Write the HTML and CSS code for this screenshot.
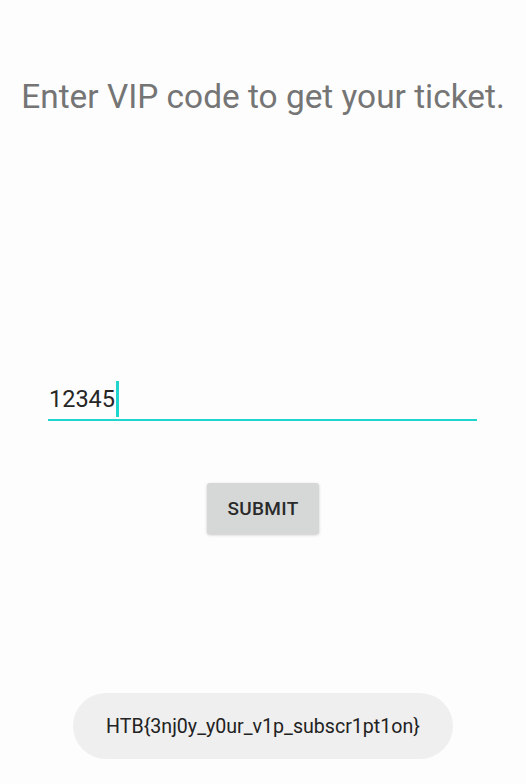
FILE: index.html
```html
<!DOCTYPE html>
<html>
<head>
<meta charset="utf-8">
<link rel="stylesheet" href="styles.css">
</head>
<body>
<div class="screen">
  <h1 class="title">Enter VIP code to get your ticket.</h1>
  <div class="field">
    <span class="value">12345</span><span class="caret"></span>
  </div>
  <div class="actions">
    <button class="btn">SUBMIT</button>
  </div>
  <div class="toast">HTB{3nj0y_y0ur_v1p_subscr1pt1on}</div>
</div>
</body>
</html>
```
FILE: styles.css
```css
html, body {
  margin: 0;
  padding: 0;
  background: #fdfdfd;
}
.screen {
  width: 526px;
  height: 784px;
  position: relative;
  font-family: Roboto, "Noto Sans", sans-serif;
  display: flex;
  flex-direction: column;
}
.title {
  margin: 75px 0 0 0;
  font-weight: 400;
  font-size: 33.4px;
  line-height: 44px;
  color: #757575;
  text-align: center;
}
.field {
  margin: 260px 49px 0 48px;
  height: 40px;
  border-bottom: 2px solid #1fd6cf;
  display: flex;
  align-items: center;
}
.value {
  font-size: 23.5px;
  color: #262626;
  padding-left: 1px;
}
.caret {
  width: 3px;
  height: 36px;
  background: #1fd6cf;
  margin-left: 1px;
}
.actions {
  display: flex;
  justify-content: center;
  margin-top: 62px;
}
.btn {
  width: 112px;
  height: 51px;
  background: #d6d7d7;
  border: none;
  border-radius: 3px;
  box-shadow: 0 1px 3px rgba(0,0,0,0.22);
  font-family: Roboto, sans-serif;
  font-size: 19px;
  font-weight: 500;
  color: #2a2a2a;
  letter-spacing: 0.3px;
  padding: 0;
}
.toast {
  position: absolute;
  left: 73px;
  top: 693px;
  width: 380px;
  height: 66px;
  border-radius: 33px;
  background: #efefef;
  display: flex;
  align-items: center;
  justify-content: center;
  font-size: 19.6px;
  color: #222;
}
```
